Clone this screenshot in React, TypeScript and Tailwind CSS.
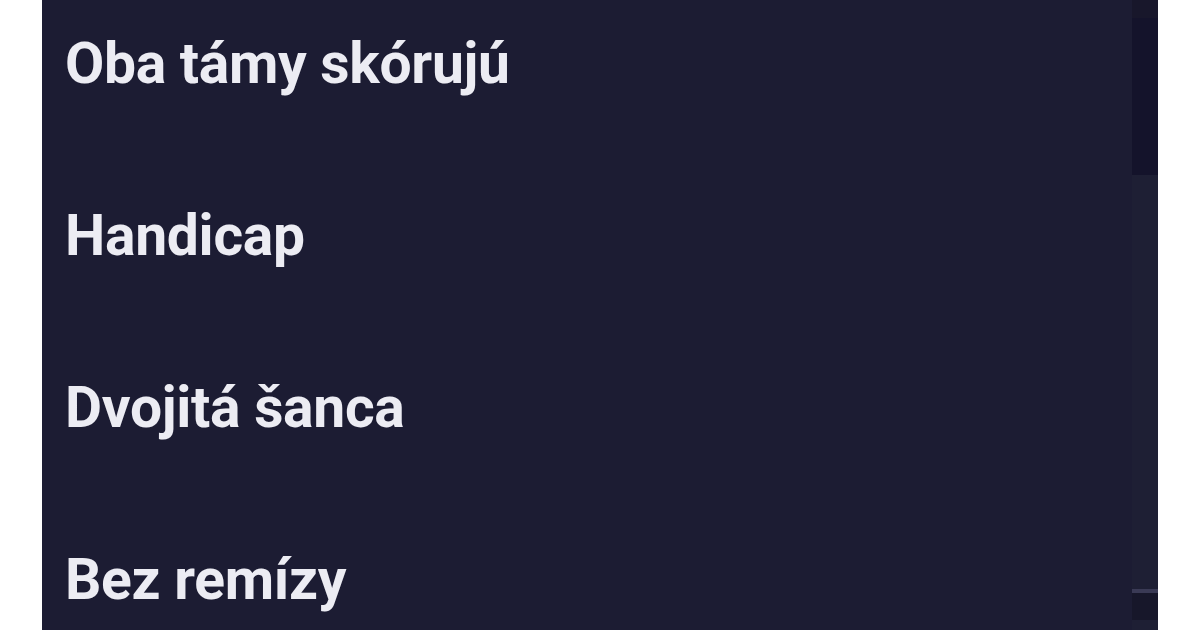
const markets = ["Oba támy skórujú", "Handicap", "Dvojitá šanca", "Bez remízy"];

export default function App() {
  return (
    <div className="flex h-[630px] w-[1200px] bg-white px-[42px]">
      <div className="flex flex-1 bg-[#1c1c33]">
        {/* Market list */}
        <ul className="flex-1 overflow-hidden pl-[23px] pt-[35px] font-['Roboto',sans-serif]">
          {markets.map((m) => (
            <li key={m} className="h-[172px]">
              <span className="block text-[57px] font-bold leading-none tracking-[-0.3px] text-[#ececf3]">
                {m}
              </span>
            </li>
          ))}
        </ul>

        {/* Scrollbar */}
        <div className="flex w-[26px] flex-col bg-[#1e1f34]">
          <div className="h-[18px] bg-[#18172b]" />
          <div className="h-[157px] bg-[#14132b]" />
          <div className="flex-1" />
          <div className="h-[4px] bg-[#3a3a55]" />
          <div className="h-[27px] bg-[#17172a]" />
          <div className="h-[10px]" />
        </div>
      </div>
    </div>
  );
}
